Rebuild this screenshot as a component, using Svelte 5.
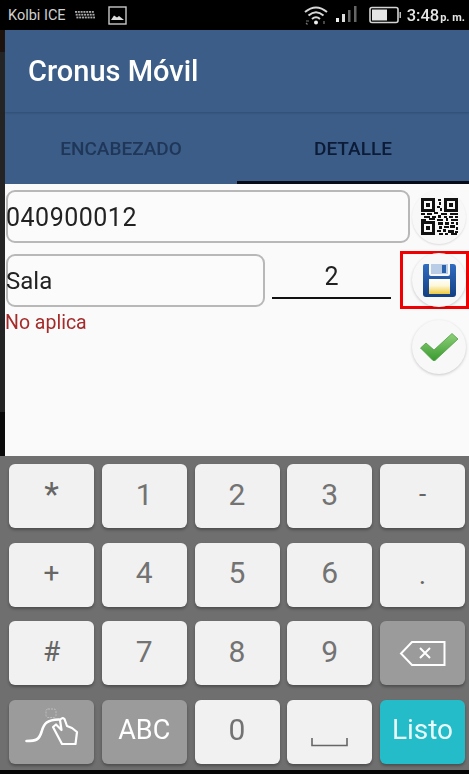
<script>
  const rows = [
    [{ t: "*", c: "sym star" }, { t: "1" }, { t: "2" }, { t: "3" }, { t: "-", c: "sym dash" }],
    [{ t: "+", c: "sym" }, { t: "4" }, { t: "5" }, { t: "6" }, { t: ".", c: "sym dot" }],
    [{ t: "#", c: "sym" }, { t: "7" }, { t: "8" }, { t: "9" }, { icon: "back", c: "dark" }],
    [{ icon: "swipe", c: "dark" }, { t: "ABC", c: "dark abc" }, { t: "0" }, { icon: "space" }, { t: "Listo", c: "go" }],
  ];

  // qr modules, drawn on a 37 x 37 grid
  const qrBits = [
    [17,1,3,2],[18,4,2,3],[16,8,3,2],[19,10,2,3],[0,15,4,2],[6,15,5,2],[13,14,4,2],[20,15,6,2],[29,15,8,2],
    [3,18,6,2],[11,18,4,2],[17,17,3,3],[23,18,3,2],[28,18,4,2],[34,18,3,2],[0,21,5,2],[8,20,6,2],[16,21,6,2],[25,20,2,3],[30,21,7,2],
    [17,24,5,3],[24,24,4,3],[30,24,3,2],[35,24,2,3],[18,28,3,3],[23,28,5,2],[29,27,5,3],[35,29,2,3],
    [16,32,4,2],[22,31,3,3],[27,32,6,3],[34,33,3,2],[18,35,4,2],[24,35,3,2],[30,35,6,2],
  ];
</script>

<div class="screen">
  <div class="edge"></div>
  <div class="phone">
    <header class="status">
      <div class="status-left">
        <span class="carrier">Kolbi ICE</span>
        <svg class="kbd" width="20" height="10" viewBox="0 0 20 10">
          <g fill="#a9a9a9">
            {#each [0, 1, 2] as r}
              {#each [0, 1, 2, 3, 4, 5, 6] as c}
                <rect x={c * 2.8 + r * 0.7} y={r * 2.8 + 1} width="2" height="1.8" />
              {/each}
            {/each}
          </g>
        </svg>
        <svg class="pic" width="19" height="19" viewBox="0 0 19 19">
          <rect x="1" y="1" width="17" height="17" fill="none" stroke="#c8c8c8" stroke-width="1.4" />
          <path d="M3 14 L6 9.5 L9 11.5 L11 10 L16 14 Z" fill="#ddd" />
        </svg>
      </div>
      <div class="status-right">
        <svg class="wifi" width="28" height="22" viewBox="0 0 28 22">
          <g fill="none" stroke="#d8d8d8" stroke-width="2">
            <path d="M3 8 Q14 -1 25 8" />
            <path d="M6.5 11.5 Q14 5 21.5 11.5" />
            <path d="M10 15 Q14 11.5 18 15" />
          </g>
          <circle cx="14" cy="18.5" r="2" fill="#eee" />
          <path d="M4 17 h3 M4 19 l1.5 1.5 M22 17 v3" stroke="#777" stroke-width="1.2" fill="none" />
        </svg>
        <svg class="signal" width="23" height="20" viewBox="0 0 23 20">
          <rect x="1" y="13" width="3" height="4" fill="#eee" />
          <rect x="7" y="9" width="3" height="8" fill="#ddd" />
          <rect x="13" y="5" width="2.5" height="12" fill="#666" />
          <rect x="19" y="1" width="2.5" height="16" fill="#666" />
        </svg>
        <svg class="batt" width="33" height="18" viewBox="0 0 33 18">
          <rect x="1" y="1.5" width="28" height="15" rx="2" fill="none" stroke="#d4d4d4" stroke-width="1.6" />
          <rect x="3" y="3.5" width="15" height="11" fill="#e4e4e4" />
          <path d="M30.5 6 h1.5 v6 h-1.5" fill="#bbb" />
        </svg>
        <span class="time">3:48<small>p. m.</small></span>
      </div>
    </header>

    <div class="appbar"><h1>Cronus Móvil</h1></div>

    <nav class="tabs">
      <div class="tab">ENCABEZADO</div>
      <div class="tab active">DETALLE</div>
    </nav>

    <main class="content">
      <div class="row first">
        <div class="field wide">040900012</div>
        <button class="fab qr">
          <svg width="37" height="37" viewBox="0 0 37 37">
            <g fill="none" stroke="#111" stroke-width="3">
              <rect x="1.5" y="1.5" width="11" height="11" />
              <rect x="24.5" y="1.5" width="11" height="11" />
              <rect x="1.5" y="24.5" width="11" height="11" />
            </g>
            <g fill="#111">
              <rect x="5" y="5" width="4" height="4" />
              <rect x="28" y="5" width="4" height="4" />
              <rect x="5" y="28" width="4" height="4" />
              {#each qrBits as b}
                <rect x={b[0]} y={b[1]} width={b[2]} height={b[3]} />
              {/each}
            </g>
          </svg>
        </button>
      </div>

      <div class="row second">
        <div class="field">Sala</div>
        <div class="qty">2</div>
        <div class="marked">
          <button class="fab">
            <svg width="35" height="35" viewBox="0 0 35 35">
              <defs>
                <linearGradient id="disk" x1="0" y1="0" x2="0" y2="1">
                  <stop offset="0" stop-color="#2f6cc0" />
                  <stop offset="1" stop-color="#123f83" />
                </linearGradient>
                <linearGradient id="label" x1="0" y1="0" x2="0" y2="1">
                  <stop offset="0" stop-color="#ffffff" />
                  <stop offset="0.45" stop-color="#fdf8d8" />
                  <stop offset="1" stop-color="#f0c93e" />
                </linearGradient>
              </defs>
              <path d="M3 1 H7 V11 Q7 13 9 13 H26 Q28 13 28 11 V1 H31 Q34 1 34 4 V31 Q34 34 31 34 H4 Q1 34 1 31 V3 Q1 1 3 1 Z" fill="url(#disk)" />
              <rect x="9" y="1" width="17" height="10" fill="#b9cde6" />
              <rect x="20" y="2" width="4" height="8" fill="#2a62ac" />
              <rect x="7" y="16" width="21" height="15" fill="url(#label)" />
            </svg>
          </button>
        </div>
      </div>

      <div class="row third">
        <p class="hint">No aplica</p>
        <button class="fab">
          <svg width="38" height="28" viewBox="0 0 38 28">
            <defs>
              <linearGradient id="tick" x1="0" y1="0" x2="0" y2="1">
                <stop offset="0" stop-color="#8fd07a" />
                <stop offset="1" stop-color="#399a2e" />
              </linearGradient>
            </defs>
            <path d="M0.5 15 L6 10 L14 17 L32 0.5 L38 6 L15 27.5 Q14 28 13 27.5 Z" fill="url(#tick)" stroke="#4f9e45" stroke-width="0.8" stroke-linejoin="round" />
          </svg>
        </button>
      </div>
    </main>

    <section class="keyboard">
      {#each rows as row}
        {#each row as key}
          <div class="key {key.c ?? ''}" class:graphic={key.icon}>
            {#if key.icon === "back"}
              <svg width="47" height="27" viewBox="0 0 47 27">
                <path d="M13 2 H45.5 V25 H13 L2 13.5 Z" fill="none" stroke="#fff" stroke-width="2" />
                <path d="M21 8 L31 18 M31 8 L21 18" stroke="#fff" stroke-width="2" />
              </svg>
            {:else if key.icon === "swipe"}
              <svg width="54" height="48" viewBox="0 0 54 48">
                <path d="M1.5 33 C11 33 14 32 16.5 24 C19 15 22 12 34 11.5" fill="none" stroke="#fff" stroke-width="2.6" stroke-linecap="round" />
                <path d="M28 19 L31 16.5 L36.5 22 L35 12 Q37 9 39.5 11 L42 18 L47 20 L52 24 L50.5 36 H37 Z" fill="#9b9b9b" stroke="#fff" stroke-width="2.2" stroke-linejoin="round" />
                <rect x="21" y="1" width="10" height="8.5" rx="2" fill="none" stroke="#bdbdbd" stroke-width="1" stroke-dasharray="2 1" />
              </svg>
            {:else if key.icon === "space"}
              <svg class="spacebar" width="37" height="10" viewBox="0 0 37 10">
                <path d="M1 1 V8.5 H36 V1" fill="none" stroke="#666" stroke-width="1.6" />
              </svg>
            {:else}
              {key.t}
            {/if}
          </div>
        {/each}
      {/each}
    </section>
    <div class="bottom"></div>
  </div>
</div>

<style>
  :global(body) {
    margin: 0;
    background: #000;
  }

  .screen {
    display: flex;
    width: 469px;
    height: 774px;
    overflow: hidden;
    font-family: Roboto, "Liberation Sans", sans-serif;
    filter: blur(0.4px);
  }

  .edge {
    width: 5px;
    flex: none;
    background: linear-gradient(#0c0806 0 30px, #1d120c 30px 52px, #242424 52px 412px, #0a0a0a 412px 476px, #1c1c1c 476px);
  }

  .phone {
    flex: 1;
    min-width: 0;
    display: flex;
    flex-direction: column;
  }

  .status {
    height: 30px;
    flex: none;
    margin-left: -5px;
    background: #000;
    display: flex;
    align-items: center;
    justify-content: space-between;
    color: #d0d0d0;
  }

  .status-left {
    display: flex;
    align-items: center;
    padding-left: 8px;
  }

  .carrier {
    font-size: 14.5px;
    width: 68px;
  }

  .kbd {
    margin: 0 13px 0 -1px;
  }

  .status-right {
    display: flex;
    align-items: center;
    padding-right: 4px;
  }

  .wifi {
    margin-right: 5px;
  }

  .signal {
    margin-right: 11px;
  }

  .batt {
    margin-right: 5px;
  }

  .time {
    font-size: 16.5px;
    font-weight: 500;
    color: #e4e4e4;
  }

  .time small {
    font-size: 11px;
    font-weight: 700;
    margin-left: 1px;
  }

  .appbar {
    height: 82px;
    flex: none;
    background: #3b5d87;
    display: flex;
    align-items: center;
    padding-left: 23px;
    box-shadow: 0 1px 2px rgba(30, 50, 80, 0.35);
    position: relative;
  }

  h1 {
    margin: 0;
    font-size: 29px;
    font-weight: 500;
    color: #fff;
  }

  .tabs {
    height: 72px;
    flex: none;
    background: #3b5d87;
    display: flex;
  }

  .tab {
    flex: 1;
    display: flex;
    align-items: center;
    justify-content: center;
    font-size: 19px;
    font-weight: 500;
    color: #1f3658;
    box-sizing: border-box;
  }

  .tab:first-child {
    flex: none;
    width: 232px;
  }

  .tab.active {
    color: #0b1b38;
    padding-top: 3px;
    border-bottom: 3px solid #050a14;
  }

  .content {
    height: 272px;
    flex: none;
    background: #fafafa;
    box-sizing: border-box;
    padding: 6px 0 0 1px;
    color: #222;
  }

  .row {
    display: flex;
  }

  .first {
    height: 53px;
    align-items: center;
  }

  .second {
    margin-top: 8px;
    height: 58px;
    align-items: center;
  }

  .third {
    justify-content: space-between;
    margin-top: 3px;
  }

  .field {
    box-sizing: border-box;
    width: 259px;
    height: 53px;
    border: 2px solid #b8b8b8;
    border-radius: 9px;
    background: #fbfbfb;
    font-size: 24px;
    text-indent: -2px;
    display: flex;
    align-items: center;
    padding-top: 2px;
    flex: none;
  }

  .wide {
    width: 404px;
    font-size: 25px;
    letter-spacing: 0.5px;
  }

  .qty {
    width: 119px;
    height: 42px;
    margin: -7px 0 0 7px;
    border-bottom: 2px solid #111;
    flex: none;
    text-align: center;
    font-size: 25px;
    line-height: 44px;
  }

  .fab {
    width: 54px;
    height: 54px;
    border-radius: 50%;
    border: 0;
    padding: 0;
    background: #f8f8f8;
    box-shadow: 0 1px 3px rgba(0, 0, 0, 0.2);
    display: flex;
    align-items: center;
    justify-content: center;
    flex: none;
  }

  .qr {
    margin-left: 2px;
    box-shadow: 0 1px 2px rgba(0, 0, 0, 0.12);
  }

  .marked {
    box-sizing: border-box;
    width: 69px;
    height: 58px;
    margin-left: 9px;
    border: 3px solid #f00000;
    display: flex;
    align-items: center;
    padding-left: 9px;
    flex: none;
  }

  .third .fab {
    margin: 8px 3px 0 0;
  }

  .hint {
    margin: -1px 0 0 -1px;
    font-size: 19.5px;
    color: #a52a2a;
  }

  .keyboard {
    flex: none;
    height: 314px;
    padding: 8px 4px 0 9px;
    box-sizing: border-box;
    background: #6f6f6f;
    display: grid;
    grid-template-columns: repeat(5, 85px);
    grid-auto-rows: 64px;
    column-gap: 7.75px;
    row-gap: 14.5px;
    margin-left: -5px;
  }

  .key {
    border-radius: 6px;
    background: #f1f1f1;
    box-shadow: 0 2px 3px rgba(0, 0, 0, 0.3);
    display: flex;
    align-items: center;
    justify-content: center;
    box-sizing: border-box;
    padding-bottom: 4px;
    font-size: 30px;
    color: #737373;
  }

  .graphic {
    padding-bottom: 0;
  }

  .dark {
    background: #9b9b9b;
    color: #fff;
  }

  .abc {
    font-size: 27px;
  }

  .go {
    background: #25bcca;
    color: #e8fbfb;
    font-size: 28px;
  }

  .sym {
    font-size: 28px;
    color: #666;
  }

  .star {
    align-items: flex-start;
    padding-top: 10px;
    font-size: 34px;
  }

  .dash {
    font-size: 26px;
  }

  .dot {
    padding: 0;
  }

  .spacebar {
    margin-top: 20px;
  }

  .bottom {
    flex: 1;
    background: #050505;
    margin-left: -5px;
  }
</style>
